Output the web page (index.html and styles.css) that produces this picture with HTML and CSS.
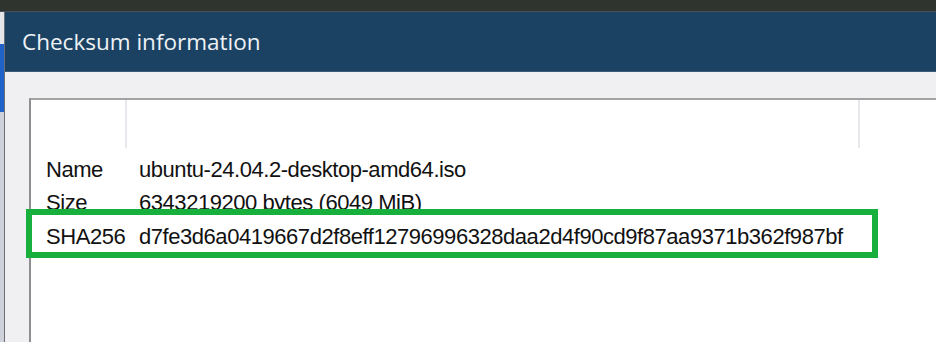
FILE: index.html
```html
<!DOCTYPE html>
<html lang="en">
<head>
    <meta charset="UTF-8">
    <title>Checksum information</title>
    <link rel="stylesheet" href="styles.css">
</head>
<body>
    <div class="topbar"></div>
    <div class="window">
        <div class="edge">
            <div class="edge-light"></div>
            <div class="edge-blue"></div>
            <div class="edge-grey"></div>
        </div>
        <div class="dialog">
            <div class="titlebar">Checksum information</div>
            <div class="content">
                <div class="list">
                    <div class="list-header">
                        <div class="col col-label"></div>
                        <div class="col col-value"></div>
                        <div class="col col-rest"></div>
                    </div>
                    <div class="row row-name">
                        <span class="label">Name</span>
                        <span class="value">ubuntu-24.04.2-desktop-amd64.iso</span>
                    </div>
                    <div class="row row-size">
                        <span class="label">Size</span>
                        <span class="value">6343219200 bytes (6049 MiB)</span>
                    </div>
                    <div class="row row-hash highlight">
                        <span class="label">SHA256</span>
                        <span class="value">d7fe3d6a0419667d2f8eff12796996328daa2d4f90cd9f87aa9371b362f987bf</span>
                    </div>
                </div>
            </div>
        </div>
    </div>
</body>
</html>
```

FILE: styles.css
```css
html, body {
    height: 100%;
}
body {
    margin: 0;
    background-color: #f0eff1;
    font-family: "Liberation Sans", Arial, sans-serif;
    color: #111;
    overflow: hidden;
    display: flex;
    flex-direction: column;
}
.topbar {
    height: 12px;
    background-color: #30342f;
    border-bottom: 1px solid #4a5058;
    box-sizing: border-box;
}
.window {
    flex: 1;
    display: flex;
}
.edge {
    width: 5px;
    display: flex;
    flex-direction: column;
    border-right: 1px solid #6a7078;
    box-sizing: border-box;
}
.edge-light {
    height: 32px;
    background-color: #e4e6ea;
}
.edge-blue {
    height: 68px;
    background-color: #1f63c8;
}
.edge-grey {
    flex: 1;
    background-color: #cfd2da;
}
.dialog {
    flex: 1;
    display: flex;
    flex-direction: column;
}
.titlebar {
    height: 60px;
    background-color: #1b4262;
    border-bottom: 1px solid #3b5a76;
    box-sizing: border-box;
    color: #eef2f6;
    font-family: "Open Sans", "Noto Sans", sans-serif;
    font-size: 22.5px;
    line-height: 60px;
    padding-left: 17px;
    padding-bottom: 2px;
}
.content {
    flex: 1;
    display: flex;
    padding: 26px 0 0 24px;
}
.list {
    flex: 1;
    background-color: #fff;
    border-top: 2px solid #a3a3a3;
    border-left: 2px solid #8e8e8e;
    margin-right: -20px;
}
.list-header {
    display: flex;
    height: 48px;
}
.col {
    border-right: 2px solid #e9e7eb;
}
.col-label {
    width: 94px;
}
.col-value {
    width: 731px;
}
.col-rest {
    flex: 1;
    border-right: none;
}
.row {
    display: flex;
    align-items: center;
    margin-left: 1px;
    width: 840px;
    padding-left: 14px;
    box-sizing: border-box;
    font-size: 22px;
    letter-spacing: -0.45px;
}
.row-name {
    height: 33px;
    margin-top: 5px;
}
.row-size {
    height: 29px;
    padding-top: 4px;
}
.row-hash {
    height: 37px;
    padding-top: 7px;
}
.label {
    width: 93px;
    flex-shrink: 0;
}
.value {
    white-space: nowrap;
}
.highlight {
    outline: 6px solid #17b03d;
}
```
